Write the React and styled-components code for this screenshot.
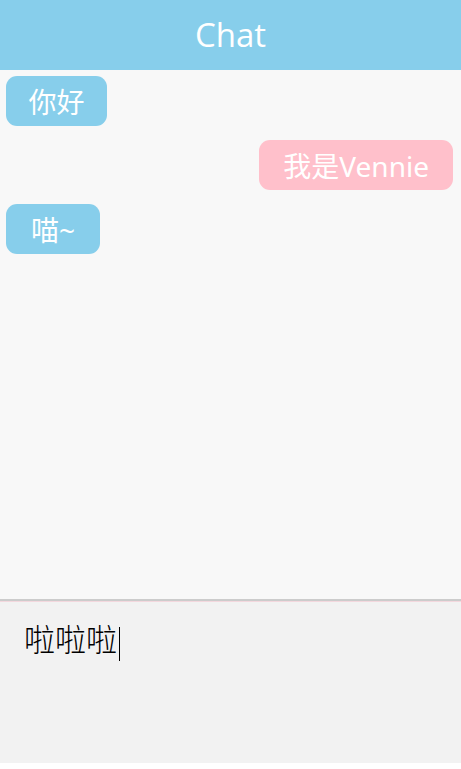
import React from "react";
import styled, { createGlobalStyle } from "styled-components";

const Global = createGlobalStyle`
  html, body { margin: 0; padding: 0; background: #ffffff; }
  body { font-family: "Noto Sans", "Noto Sans CJK SC", sans-serif; }
`;

const Page = styled.div`
  width: 461px;
  height: 763px;
  display: flex;
  flex-direction: column;
  background: #f8f8f8;
`;

const Header = styled.header`
  height: 70px;
  flex: none;
  background: #87ceeb;
  color: #fff;
  display: flex;
  align-items: center;
  justify-content: center;
  padding-bottom: 1px;
  box-sizing: border-box;
  font-family: "Open Sans", "Noto Sans", sans-serif;
  font-size: 33px;
`;

const Messages = styled.div`
  flex: 1;
  display: flex;
  flex-direction: column;
  gap: 14px;
  padding: 6px 8px 6px 6px;
`;

const Bubble = styled.div`
  align-self: ${(p) => (p.$mine ? "flex-end" : "flex-start")};
  background: ${(p) => (p.$mine ? "#ffc0cb" : "#87ceeb")};
  color: #fff;
  border-radius: 11px;
  height: 50px;
  padding: 0 ${(p) => p.$pad || 22.5}px;
  display: flex;
  align-items: center;
  font-family: "Noto Sans", "Noto Sans CJK SC", sans-serif;
  font-size: 28px;
`;

const InputArea = styled.div`
  height: 164px;
  flex: none;
  background: #f2f2f2;
  border-top: 2px solid #cccccc;
  box-shadow: inset 0 1px 0 #f4d8de;
  padding: 17px 24px;
  box-sizing: border-box;
  font-family: "Liberation Serif", "Noto Sans CJK SC", serif;
  font-size: 31px;
  font-weight: 300;
  color: #000;
  line-height: 46px;
`;

const Caret = styled.span`
  display: inline-block;
  width: 1px;
  height: 34px;
  background: #000;
  vertical-align: middle;
  margin-left: 2px;
`;

export default function App() {
  return (
    <>
      <Global />
      <Page>
        <Header>Chat</Header>
        <Messages>
          <Bubble>你好</Bubble>
          <Bubble $mine $pad={24}>我是Vennie</Bubble>
          <Bubble $pad={25}>喵~</Bubble>
        </Messages>
        <InputArea>
          啦啦啦<Caret />
        </InputArea>
      </Page>
    </>
  );
}
